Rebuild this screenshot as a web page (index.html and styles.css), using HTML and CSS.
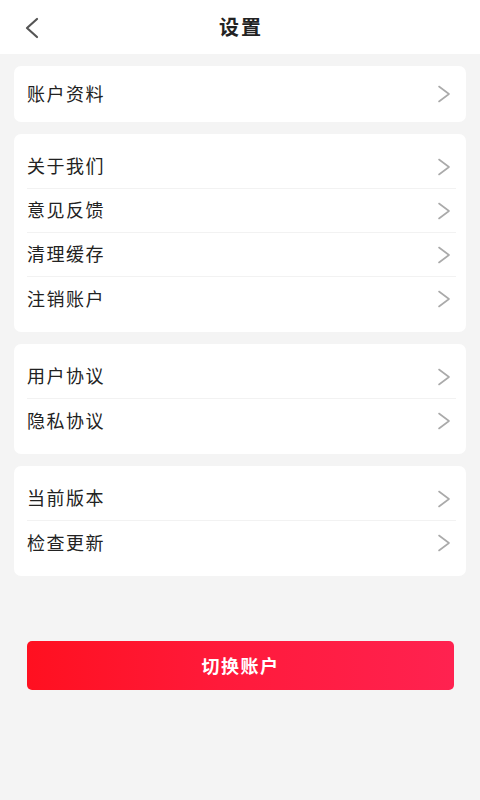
FILE: index.html
```html
<!DOCTYPE html>
<html lang="zh-CN">
<head>
<meta charset="utf-8">
<title>设置</title>
<link rel="stylesheet" href="styles.css">
</head>
<body>
<div class="page">
  <header class="topbar">
    <span class="back">
      <svg width="20" height="24" viewBox="0 0 20 24"><path d="M15 3 L5 12 L15 21" fill="none" stroke="#555" stroke-width="2.2" stroke-linecap="round" stroke-linejoin="round"/></svg>
    </span>
    <h1 class="title">设置</h1>
  </header>

  <main class="content">
    <section class="card card-single">
      <div class="row"><span class="label">账户资料</span><svg class="chev" viewBox="0 0 14 18"><path d="M2 1.5 L12 9 L2 16.5" fill="none" stroke="#aaa" stroke-width="1.6" stroke-linecap="round" stroke-linejoin="round"/></svg></div>
    </section>

    <section class="card">
      <div class="row"><span class="label">关于我们</span><svg class="chev" viewBox="0 0 14 18"><path d="M2 1.5 L12 9 L2 16.5" fill="none" stroke="#aaa" stroke-width="1.6" stroke-linecap="round" stroke-linejoin="round"/></svg></div>
      <div class="row"><span class="label">意见反馈</span><svg class="chev" viewBox="0 0 14 18"><path d="M2 1.5 L12 9 L2 16.5" fill="none" stroke="#aaa" stroke-width="1.6" stroke-linecap="round" stroke-linejoin="round"/></svg></div>
      <div class="row"><span class="label">清理缓存</span><svg class="chev" viewBox="0 0 14 18"><path d="M2 1.5 L12 9 L2 16.5" fill="none" stroke="#aaa" stroke-width="1.6" stroke-linecap="round" stroke-linejoin="round"/></svg></div>
      <div class="row"><span class="label">注销账户</span><svg class="chev" viewBox="0 0 14 18"><path d="M2 1.5 L12 9 L2 16.5" fill="none" stroke="#aaa" stroke-width="1.6" stroke-linecap="round" stroke-linejoin="round"/></svg></div>
    </section>

    <section class="card">
      <div class="row"><span class="label">用户协议</span><svg class="chev" viewBox="0 0 14 18"><path d="M2 1.5 L12 9 L2 16.5" fill="none" stroke="#aaa" stroke-width="1.6" stroke-linecap="round" stroke-linejoin="round"/></svg></div>
      <div class="row"><span class="label">隐私协议</span><svg class="chev" viewBox="0 0 14 18"><path d="M2 1.5 L12 9 L2 16.5" fill="none" stroke="#aaa" stroke-width="1.6" stroke-linecap="round" stroke-linejoin="round"/></svg></div>
    </section>

    <section class="card">
      <div class="row"><span class="label">当前版本</span><svg class="chev" viewBox="0 0 14 18"><path d="M2 1.5 L12 9 L2 16.5" fill="none" stroke="#aaa" stroke-width="1.6" stroke-linecap="round" stroke-linejoin="round"/></svg></div>
      <div class="row"><span class="label">检查更新</span><svg class="chev" viewBox="0 0 14 18"><path d="M2 1.5 L12 9 L2 16.5" fill="none" stroke="#aaa" stroke-width="1.6" stroke-linecap="round" stroke-linejoin="round"/></svg></div>
    </section>

    <button class="switch" type="button">切换账户</button>
  </main>
</div>
</body>
</html>
```

FILE: styles.css
```css
* { box-sizing: border-box; }
html, body {
  margin: 0;
  padding: 0;
  background: #f4f4f4;
  font-family: "Noto Sans CJK SC", "Noto Sans", sans-serif;
  color: #222;
}
.page {
  width: 480px;
  min-height: 800px;
  background: #f4f4f4;
}
.topbar {
  height: 54px;
  background: #fff;
  display: flex;
  align-items: center;
  justify-content: center;
  position: relative;
}
.back {
  position: absolute;
  left: 22px;
  top: 16px;
  width: 20px;
  height: 24px;
  display: block;
}
.back svg { display: block; }
.title {
  margin: 0;
  font-size: 20px;
  line-height: 28px;
  font-weight: 700;
  color: #222;
  letter-spacing: 2px;
  padding-left: 2px;
}
.content {
  padding: 12px 14px 0;
  display: flex;
  flex-direction: column;
  gap: 12px;
}
.card {
  background: #fff;
  border-radius: 7px;
  padding: 11px 10px 11px 13px;
}
.card-single {
  padding-top: 6px;
  padding-bottom: 6px;
}
.row {
  height: 44px;
  display: flex;
  align-items: center;
  justify-content: space-between;
  border-bottom: 1px solid #f2f2f2;
  padding-right: 5px;
}
.row:last-child { border-bottom: none; }
.label {
  font-size: 18px;
  line-height: 24px;
  padding-bottom: 3px;
  letter-spacing: 1.5px;
  color: #222;
}
.chev {
  width: 14px;
  height: 18px;
  display: block;
}
.switch {
  margin: 53px 12px 0 13px;
  height: 49px;
  border: none;
  border-radius: 5px;
  background: linear-gradient(90deg, #ff1020 0%, #ff1a3a 45%, #ff2250 100%);
  color: #fff;
  font-family: "Noto Sans CJK SC", "Noto Sans", sans-serif;
  font-size: 18px;
  font-weight: 700;
  letter-spacing: 1.5px;
  padding-bottom: 2px;
}
```
